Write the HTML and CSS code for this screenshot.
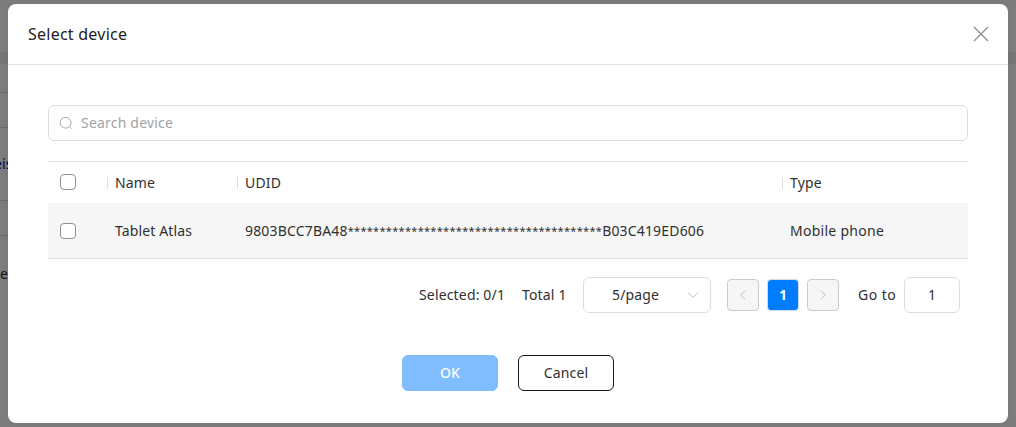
FILE: index.html
```
<!DOCTYPE html>
<html lang="en">
<head>
<meta charset="utf-8">
<title>Select device</title>
<link rel="stylesheet" href="styles.css">
</head>
<body>
<div class="backdrop">
  <div class="strip"></div>
  <div class="line line-a"></div>
  <div class="line line-b"></div>
  <div class="line line-c"></div>
  <div class="line line-d"></div>
  <span class="peek peek-link">eis</span>
  <span class="peek peek-text">e</span>
</div>
<main class="dialog">
  <header class="dialog-header">
    <h1 class="title">Select device</h1>
    <svg class="close" width="16" height="16" viewBox="0 0 16 16"><path d="M1 1L15 15M15 1L1 15"/></svg>
  </header>
  <section class="dialog-body">
    <div class="search">
      <svg class="search-icon" width="14" height="14" viewBox="0 0 14 14"><circle cx="6.6" cy="6.7" r="5.4"/><path d="M10.5 10.6L12.7 12.8"/></svg>
      <span class="placeholder">Search device</span>
    </div>
    <div class="table">
      <div class="row head">
        <div class="check"><span class="checkbox"></span></div>
        <div class="cell">Name</div>
        <div class="cell">UDID</div>
        <div class="cell">Type</div>
      </div>
      <div class="row item">
        <div class="check"><span class="checkbox"></span></div>
        <div class="cell name">Tablet Atlas</div>
        <div class="cell udid">9803BCC7BA48<span class="stars">****************************************</span>B03C419ED606</div>
        <div class="cell type">Mobile phone</div>
      </div>
    </div>
    <div class="pagination">
      <span class="selected">Selected: 0/1</span>
      <span class="total">Total 1</span>
      <div class="page-size"><span>5/page</span><svg class="chevron" width="12" height="12" viewBox="0 0 12 12"><path d="M1 3.5L6 8.5L11 3.5"/></svg></div>
      <div class="page-button"><svg class="chevron" width="12" height="12" viewBox="0 0 12 12"><path d="M8 1.8L3.8 6L8 10.2"/></svg></div>
      <div class="page-button active">1</div>
      <div class="page-button"><svg class="chevron" width="12" height="12" viewBox="0 0 12 12"><path d="M4 1.8L8.2 6L4 10.2"/></svg></div>
      <span class="goto">Go to</span>
      <div class="goto-input">1</div>
    </div>
    <div class="actions">
      <div class="button primary">OK</div>
      <div class="button">Cancel</div>
    </div>
  </section>
</main>
</body>
</html>
```
FILE: styles.css
```
* { box-sizing: border-box; }
body {
  margin: 0;
  width: 1016px;
  height: 427px;
  overflow: hidden;
  padding: 4px 8px;
  background: #7d7d7d;
  color: #303030;
  font: 14px/20px "Noto Sans", "Open Sans", sans-serif;
  white-space: nowrap;
}
.backdrop { position: absolute; inset: 0; z-index: -1; overflow: hidden; }
.strip { position: absolute; top: 52px; width: 100%; height: 12px; background: #777; }
.line { position: absolute; left: 0; width: 8px; height: 1px; background: #6d6d6d; }
.line-a { top: 92px; }
.line-b { top: 127px; }
.line-c { top: 200px; }
.line-d { top: 235px; }
.peek { position: absolute; }
.peek-link { left: -6px; top: 154px; color: #00004d; }
.peek-text { left: 0; top: 264px; color: #111; }
.dialog {
  width: 1000px;
  height: 419px;
  background: #fff;
  border-radius: 8px;
  box-shadow: 0 0 10px rgba(0, 0, 0, .06);
}
.dialog-header {
  height: 61px;
  padding: 0 19px 0 20px;
  display: flex;
  align-items: center;
  justify-content: space-between;
  border-bottom: 1px solid #e1e1e3;
}
.title { margin: 0; font-size: 16px; font-weight: 400; letter-spacing: .24px; color: #222; }
.close { fill: none; stroke: #8d9095; stroke-width: 1.4; }
.dialog-body { padding: 40px 40px 0; }
.search {
  height: 36px;
  padding-left: 10px;
  display: flex;
  align-items: center;
  gap: 8px;
  border: 1px solid #dcdce6;
  border-radius: 6px;
  color: #a1a3a6;
}
.placeholder { letter-spacing: .2px; }
.search-icon { fill: none; stroke: #a3a5aa; }
.table { margin-top: 20px; border-top: 1px solid #dedede; }
.row { display: grid; grid-template-columns: 59px 130px 545px 186px; align-items: center; }
.head { height: 41px; }
.item { height: 56px; background: #f6f6f6; border-bottom: 1px solid #dedede; }
.cell { padding-left: 8px; }
.check { padding-left: 12px; }
.head .check { padding-bottom: 1px; }
.head .cell { height: 12px; border-left: 1px solid #dedfe3; padding-left: 7px; line-height: 12px; letter-spacing: .15px; }
.checkbox { display: block; width: 16px; height: 16px; border: 1px solid #8e9196; border-radius: 4px; background: #fff; }
.name { letter-spacing: .13px; }
.udid { letter-spacing: .17px; }
.type { letter-spacing: .27px; }
.stars { font-size: 11px; letter-spacing: .3px; line-height: 1; vertical-align: 1px; }
.pagination { margin: 18px 8px 0 0; height: 36px; display: flex; align-items: center; justify-content: flex-end; letter-spacing: .16px; }
.selected { width: 103px; }
.total { width: 61px; }
.page-size {
  width: 128px;
  height: 36px;
  padding: 0 11px 0 28px;
  margin-right: 16px;
  display: flex;
  align-items: center;
  justify-content: space-between;
  border: 1px solid #dcdce6;
  border-radius: 6px;
}
.chevron { fill: none; stroke: #bcbec3; }
.page-button {
  width: 32px;
  height: 32px;
  margin-right: 8px;
  display: flex;
  align-items: center;
  justify-content: center;
  border: 1px solid #cacaca;
  border-radius: 4px;
  background: #f6f6f6;
}
.active { border-color: #d5dce5; background: #007dff; color: #fff; font-weight: 700; }
.goto { width: 46px; margin-left: 11px; letter-spacing: .5px; }
.goto-input { width: 56px; height: 36px; line-height: 34px; text-align: center; border: 1px solid #dcdce6; border-radius: 6px; }
.actions { margin-top: 42px; display: flex; justify-content: center; gap: 20px; }
.button {
  width: 96px;
  height: 36px;
  display: flex;
  align-items: center;
  justify-content: center;
  border: 1px solid #191919;
  border-radius: 6px;
  letter-spacing: .15px;
}
.primary { background: #80bdff; border-color: #80bdff; color: #fff; font-weight: 500; }
```
